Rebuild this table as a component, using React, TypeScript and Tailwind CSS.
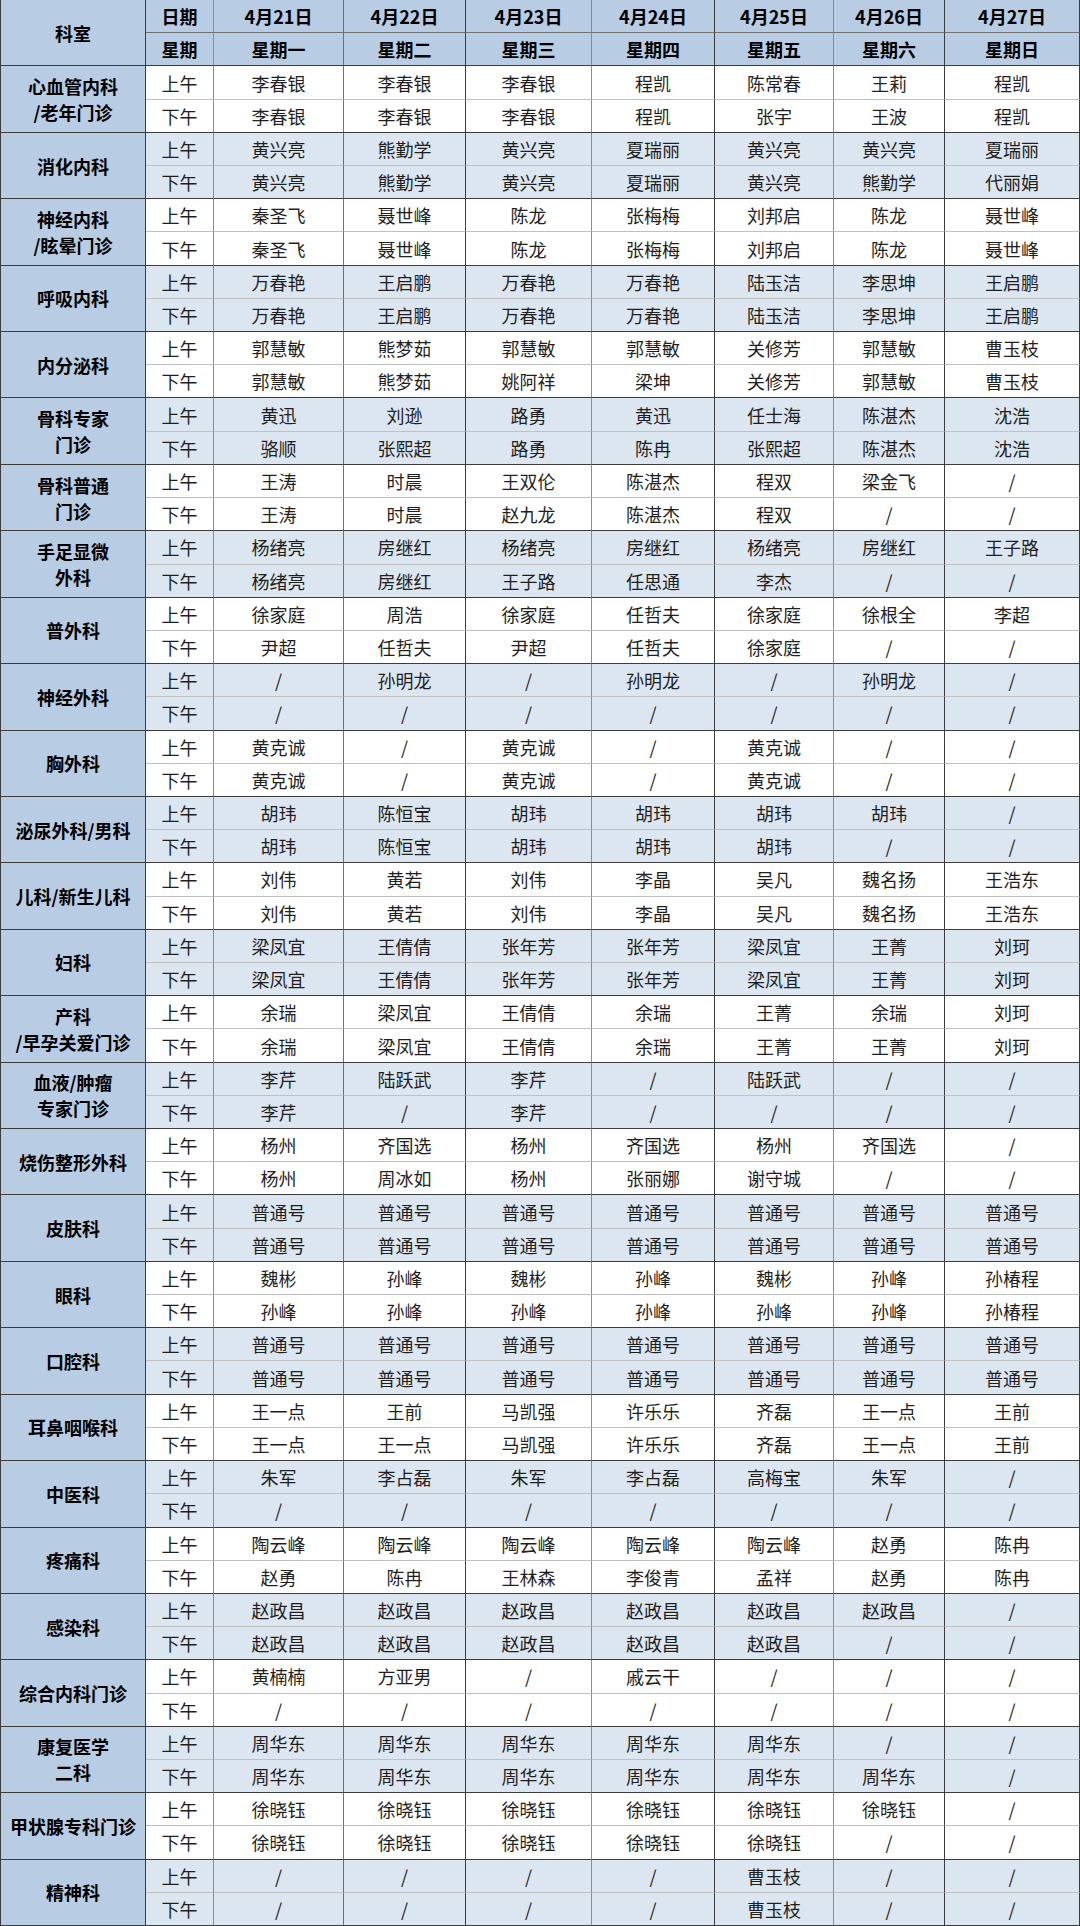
import React from "react";

type Dept = { name: string[]; am: string[]; pm: string[] };

const S = "/";
const depts: Dept[] = [
  { name: ["心血管内科", "/老年门诊"], am: ["李春银", "李春银", "李春银", "程凯", "陈常春", "王莉", "程凯"], pm: ["李春银", "李春银", "李春银", "程凯", "张宇", "王波", "程凯"] },
  { name: ["消化内科"], am: ["黄兴亮", "熊勤学", "黄兴亮", "夏瑞丽", "黄兴亮", "黄兴亮", "夏瑞丽"], pm: ["黄兴亮", "熊勤学", "黄兴亮", "夏瑞丽", "黄兴亮", "熊勤学", "代丽娟"] },
  { name: ["神经内科", "/眩晕门诊"], am: ["秦圣飞", "聂世峰", "陈龙", "张梅梅", "刘邦启", "陈龙", "聂世峰"], pm: ["秦圣飞", "聂世峰", "陈龙", "张梅梅", "刘邦启", "陈龙", "聂世峰"] },
  { name: ["呼吸内科"], am: ["万春艳", "王启鹏", "万春艳", "万春艳", "陆玉洁", "李思坤", "王启鹏"], pm: ["万春艳", "王启鹏", "万春艳", "万春艳", "陆玉洁", "李思坤", "王启鹏"] },
  { name: ["内分泌科"], am: ["郭慧敏", "熊梦茹", "郭慧敏", "郭慧敏", "关修芳", "郭慧敏", "曹玉枝"], pm: ["郭慧敏", "熊梦茹", "姚阿祥", "梁坤", "关修芳", "郭慧敏", "曹玉枝"] },
  { name: ["骨科专家", "门诊"], am: ["黄迅", "刘逊", "路勇", "黄迅", "任士海", "陈湛杰", "沈浩"], pm: ["骆顺", "张熙超", "路勇", "陈冉", "张熙超", "陈湛杰", "沈浩"] },
  { name: ["骨科普通", "门诊"], am: ["王涛", "时晨", "王双伦", "陈湛杰", "程双", "梁金飞", S], pm: ["王涛", "时晨", "赵九龙", "陈湛杰", "程双", S, S] },
  { name: ["手足显微", "外科"], am: ["杨绪亮", "房继红", "杨绪亮", "房继红", "杨绪亮", "房继红", "王子路"], pm: ["杨绪亮", "房继红", "王子路", "任思通", "李杰", S, S] },
  { name: ["普外科"], am: ["徐家庭", "周浩", "徐家庭", "任哲夫", "徐家庭", "徐根全", "李超"], pm: ["尹超", "任哲夫", "尹超", "任哲夫", "徐家庭", S, S] },
  { name: ["神经外科"], am: [S, "孙明龙", S, "孙明龙", S, "孙明龙", S], pm: [S, S, S, S, S, S, S] },
  { name: ["胸外科"], am: ["黄克诚", S, "黄克诚", S, "黄克诚", S, S], pm: ["黄克诚", S, "黄克诚", S, "黄克诚", S, S] },
  { name: ["泌尿外科/男科"], am: ["胡玮", "陈恒宝", "胡玮", "胡玮", "胡玮", "胡玮", S], pm: ["胡玮", "陈恒宝", "胡玮", "胡玮", "胡玮", S, S] },
  { name: ["儿科/新生儿科"], am: ["刘伟", "黄若", "刘伟", "李晶", "吴凡", "魏名扬", "王浩东"], pm: ["刘伟", "黄若", "刘伟", "李晶", "吴凡", "魏名扬", "王浩东"] },
  { name: ["妇科"], am: ["梁凤宜", "王倩倩", "张年芳", "张年芳", "梁凤宜", "王菁", "刘珂"], pm: ["梁凤宜", "王倩倩", "张年芳", "张年芳", "梁凤宜", "王菁", "刘珂"] },
  { name: ["产科", "/早孕关爱门诊"], am: ["余瑞", "梁凤宜", "王倩倩", "余瑞", "王菁", "余瑞", "刘珂"], pm: ["余瑞", "梁凤宜", "王倩倩", "余瑞", "王菁", "王菁", "刘珂"] },
  { name: ["血液/肿瘤", "专家门诊"], am: ["李芹", "陆跃武", "李芹", S, "陆跃武", S, S], pm: ["李芹", S, "李芹", S, S, S, S] },
  { name: ["烧伤整形外科"], am: ["杨州", "齐国选", "杨州", "齐国选", "杨州", "齐国选", S], pm: ["杨州", "周冰如", "杨州", "张丽娜", "谢守城", S, S] },
  { name: ["皮肤科"], am: Array(7).fill("普通号"), pm: Array(7).fill("普通号") },
  { name: ["眼科"], am: ["魏彬", "孙峰", "魏彬", "孙峰", "魏彬", "孙峰", "孙椿程"], pm: ["孙峰", "孙峰", "孙峰", "孙峰", "孙峰", "孙峰", "孙椿程"] },
  { name: ["口腔科"], am: Array(7).fill("普通号"), pm: Array(7).fill("普通号") },
  { name: ["耳鼻咽喉科"], am: ["王一点", "王前", "马凯强", "许乐乐", "齐磊", "王一点", "王前"], pm: ["王一点", "王一点", "马凯强", "许乐乐", "齐磊", "王一点", "王前"] },
  { name: ["中医科"], am: ["朱军", "李占磊", "朱军", "李占磊", "高梅宝", "朱军", S], pm: [S, S, S, S, S, S, S] },
  { name: ["疼痛科"], am: ["陶云峰", "陶云峰", "陶云峰", "陶云峰", "陶云峰", "赵勇", "陈冉"], pm: ["赵勇", "陈冉", "王林森", "李俊青", "孟祥", "赵勇", "陈冉"] },
  { name: ["感染科"], am: ["赵政昌", "赵政昌", "赵政昌", "赵政昌", "赵政昌", "赵政昌", S], pm: ["赵政昌", "赵政昌", "赵政昌", "赵政昌", "赵政昌", S, S] },
  { name: ["综合内科门诊"], am: ["黄楠楠", "方亚男", S, "戚云干", S, S, S], pm: [S, S, S, S, S, S, S] },
  { name: ["康复医学", "二科"], am: ["周华东", "周华东", "周华东", "周华东", "周华东", S, S], pm: ["周华东", "周华东", "周华东", "周华东", "周华东", "周华东", S] },
  { name: ["甲状腺专科门诊"], am: ["徐晓钰", "徐晓钰", "徐晓钰", "徐晓钰", "徐晓钰", "徐晓钰", S], pm: ["徐晓钰", "徐晓钰", "徐晓钰", "徐晓钰", "徐晓钰", S, S] },
  { name: ["精神科"], am: [S, S, S, S, "曹玉枝", S, S], pm: [S, S, S, S, "曹玉枝", S, S] },
];

const dates = ["4月21日", "4月22日", "4月23日", "4月24日", "4月25日", "4月26日", "4月27日"];
const weeks = ["星期一", "星期二", "星期三", "星期四", "星期五", "星期六", "星期日"];

// right-border colour per column index 0..8
const vcls = [
  "border-r-[#3c3c3c]",
  "border-r-[#8c8c8c]",
  "border-r-[#707070]",
  "border-r-[#3c3c3c]",
  "border-r-[#8c8c8c]",
  "border-r-[#3c3c3c]",
  "border-r-[#8c8c8c]",
  "border-r-[#3c3c3c]",
  "border-r-[#3c3c3c]",
];

const base = "flex items-center justify-center text-center border-r border-b leading-[26px]";

export default function App() {
  const cells: React.ReactNode[] = [];

  // header row 1
  cells.push(
    <div key="h-ks" className={`${base} row-span-2 border-l border-l-[#3c3c3c] ${vcls[0]} border-b-[#3c3c3c] bg-[#b8cce4] font-bold text-black`}>
      科室
    </div>
  );
  cells.push(
    <div key="h-rq" className={`${base} ${vcls[1]} border-b-[#707070] bg-[#b8cce4] font-bold text-black`}>
      日期
    </div>
  );
  dates.forEach((d, i) =>
    cells.push(
      <div key={`h-d-${i}`} className={`${base} ${vcls[i + 2]} border-b-[#707070] bg-[#b8cce4] font-bold text-black`}>
        {d}
      </div>
    )
  );
  // header row 2
  cells.push(
    <div key="h-xq" className={`${base} ${vcls[1]} border-b-[#3c3c3c] bg-[#b8cce4] font-bold text-black`}>
      星期
    </div>
  );
  weeks.forEach((w, i) =>
    cells.push(
      <div key={`h-w-${i}`} className={`${base} ${vcls[i + 2]} border-b-[#3c3c3c] bg-[#b8cce4] font-bold text-black`}>
        {w}
      </div>
    )
  );

  depts.forEach((dp, di) => {
    const band = di % 2 === 1 ? "bg-[#dce6f1]" : "bg-white";
    cells.push(
      <div key={`d-${di}`} className={`${base} row-span-2 flex-col border-l border-l-[#3c3c3c] ${vcls[0]} border-b-[#3c3c3c] bg-[#b8cce4] font-bold text-black`}>
        {dp.name.map((n, k) => (
          <span key={k} className="block whitespace-nowrap">
            {n}
          </span>
        ))}
      </div>
    );
    (["am", "pm"] as const).forEach((p) => {
      const bb = p === "am" ? "border-b-[#c0c0c0]" : "border-b-[#3c3c3c]";
      cells.push(
        <div key={`d-${di}-${p}`} className={`${base} ${vcls[1]} ${bb} ${band} text-[#1f1f1f]`}>
          {p === "am" ? "上午" : "下午"}
        </div>
      );
      dp[p].forEach((n, ci) =>
        cells.push(
          <div key={`d-${di}-${p}-${ci}`} className={`${base} ${vcls[ci + 2]} ${bb} ${band} text-[#1f1f1f]`}>
            {n}
          </div>
        )
      );
    });
  });

  return (
    <div className="w-[1080px] h-[1926px] bg-white font-['Noto_Sans_CJK_SC','Noto_Sans',sans-serif] text-[18px] overflow-hidden">
      <div className="grid h-[1926px] w-[1080px] grid-cols-[146px_68px_130px_122px_126px_123px_119px_111px_135px] grid-rows-[repeat(58,minmax(0,1fr))]">
        {cells}
      </div>
    </div>
  );
}
